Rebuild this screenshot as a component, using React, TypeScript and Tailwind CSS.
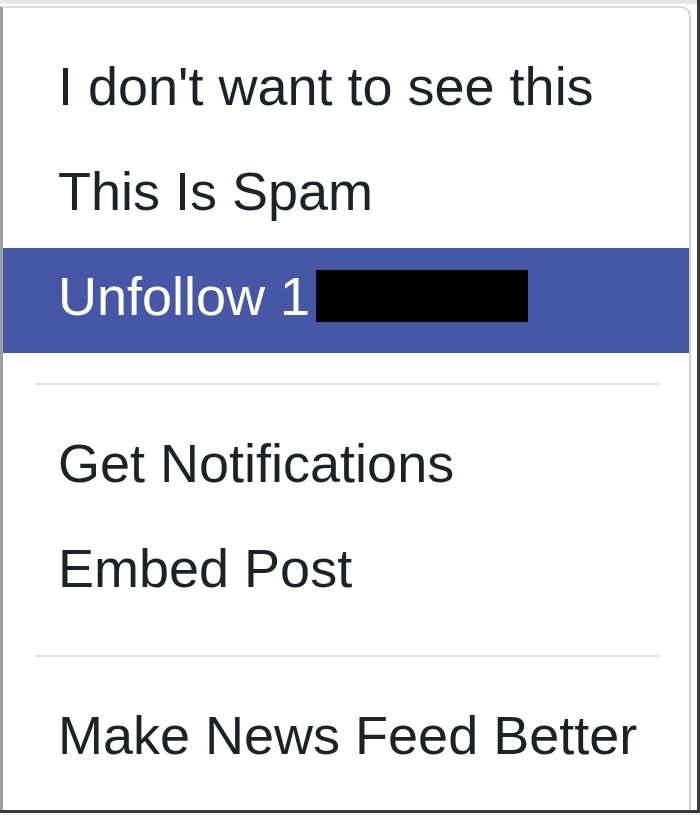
const items: { label: string; active?: boolean; redacted?: boolean }[][] = [
  [
    { label: "I don't want to see this" },
    { label: "This Is Spam" },
    { label: "Unfollow 1", active: true, redacted: true },
  ],
  [{ label: "Get Notifications" }, { label: "Embed Post" }],
  [{ label: "Make News Feed Better" }],
];

function MenuItem({
  label,
  active,
  redacted,
}: {
  label: string;
  active?: boolean;
  redacted?: boolean;
}) {
  return (
    <div
      className={
        active
          ? "flex items-start h-[105px] pl-[55px] pt-[18px] bg-[#4658a5] text-white"
          : "flex items-start h-[105px] pl-[55px] pt-[18px] text-[#1d2129]"
      }
    >
      <span className="text-[54px] leading-[60px] whitespace-nowrap">{label}</span>
      {redacted && <span className="ml-[6px] mt-[4px] w-[212px] h-[52px] bg-black" />}
    </div>
  );
}

export default function App() {
  return (
    <div className="flex flex-col w-[700px] h-[815px] bg-white overflow-hidden font-['Liberation_Sans',Arial,sans-serif]">
      <div className="flex flex-1 min-h-0">
        <div className="flex flex-col flex-1 min-w-0">
          <div className="h-[4px] bg-[#e6e6e6] shrink-0" />
          <div className="flex flex-1 min-h-0">
            <div className="flex flex-col w-[691px] mt-[2px] border-l-[3px] border-t-2 border-r-2 border-l-[#9aa3a0] border-t-[#dcdcdc] border-r-[#cfcfcf] rounded-tr-[10px] pt-[30px]">
              {items.map((group, gi) => (
                <div key={gi}>
                  {gi > 0 && <div className="ml-[32px] mr-[30px] my-[30px] h-[2px] bg-[#e3e3e3]" />}
                  {group.map((it) => (
                    <MenuItem key={it.label} {...it} />
                  ))}
                </div>
              ))}
            </div>
            <div className="flex-1" />
          </div>
        </div>
        <div className="w-[3px] bg-[#3a3a3a] shrink-0" />
      </div>
      <div className="h-[3px] bg-[#3a3a3a] shrink-0" />
      <div className="h-[2px] bg-[#f2f2f2] shrink-0" />
    </div>
  );
}
